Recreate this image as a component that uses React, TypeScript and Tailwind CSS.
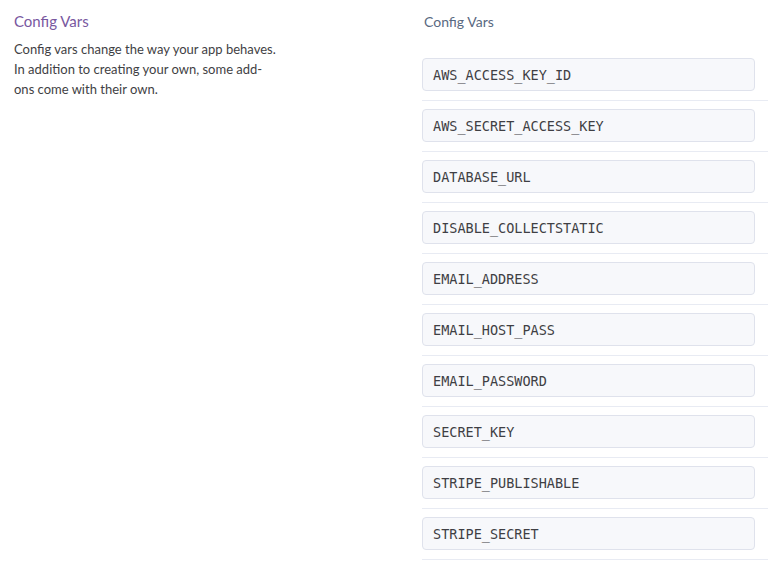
const vars = [
  "AWS_ACCESS_KEY_ID",
  "AWS_SECRET_ACCESS_KEY",
  "DATABASE_URL",
  "DISABLE_COLLECTSTATIC",
  "EMAIL_ADDRESS",
  "EMAIL_HOST_PASS",
  "EMAIL_PASSWORD",
  "SECRET_KEY",
  "STRIPE_PUBLISHABLE",
  "STRIPE_SECRET",
];

export default function App() {
  return (
    <div className="flex min-h-[562px] w-[768px] overflow-hidden bg-white font-['Lato','Open_Sans',sans-serif]">
      {/* Description */}
      <div className="w-[422px] shrink-0 pl-[14px] pt-[10px]">
        <h2 className="text-[15px] leading-[22px] text-[#79589f]">Config Vars</h2>
        <p className="mt-[7px] w-[300px] text-[13px] leading-[20px] text-[#3f3f44]">
          Config vars change the way your app behaves.
          <br />
          In addition to creating your own, some add-
          <br />
          ons come with their own.
        </p>
      </div>

      {/* Vars list */}
      <div className="flex-1 pt-[12px]">
        <div className="pl-[2px] text-[14px] leading-[20px] text-[#596981]">Config Vars</div>
        <div className="mt-[26px] flex flex-col">
          {vars.map((name) => (
            <div key={name} className="border-b border-[#e8ebf3] pb-[9px] pt-[8px] first:pt-0">
              <div className="flex h-[33px] w-[333px] items-center rounded-[4px] border border-[#dfe2ec] bg-[#f7f8fb] px-[10px] pt-[2px] font-['DejaVu_Sans_Mono',monospace] text-[13.5px] text-[#3f3f44]">
                {name}
              </div>
            </div>
          ))}
        </div>
      </div>
    </div>
  );
}
